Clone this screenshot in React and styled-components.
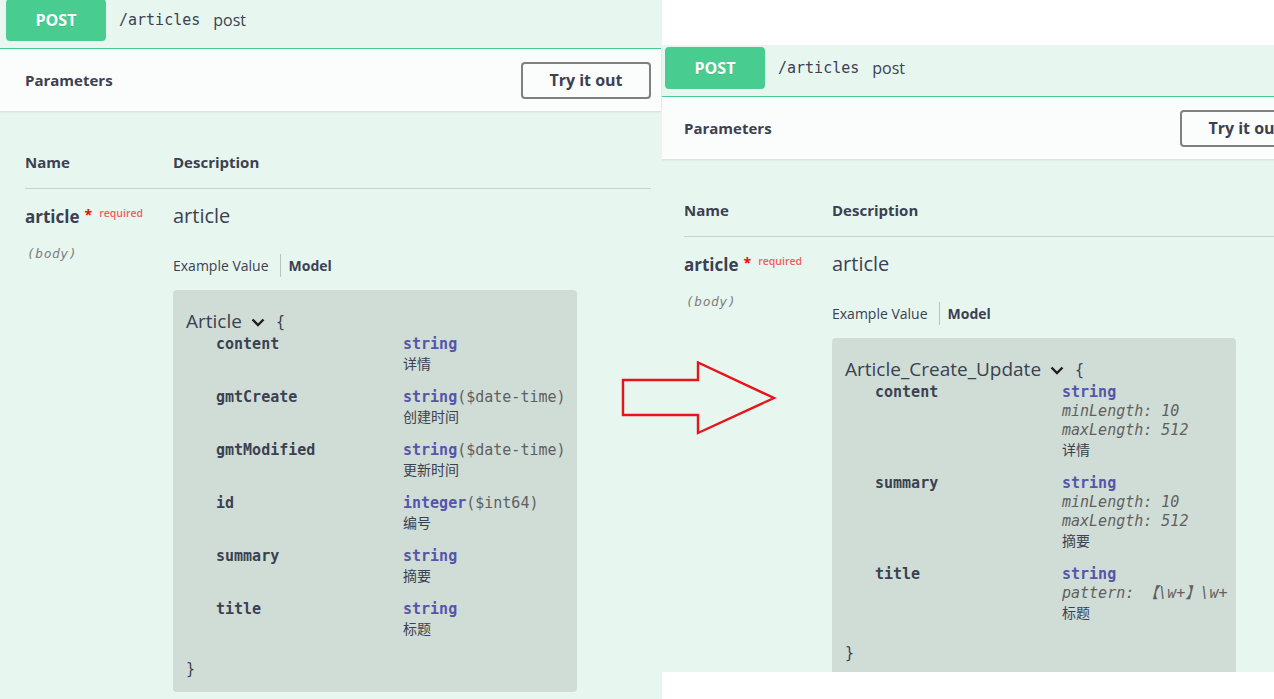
import React from 'react';
import styled, { createGlobalStyle } from 'styled-components';

const SANS = '"Open Sans", "Noto Sans CJK SC", sans-serif';
const MONO = '"DejaVu Sans Mono", "Noto Sans CJK SC", monospace';

const GlobalStyle = createGlobalStyle`
  html, body {
    margin: 0;
    padding: 0;
    background: #fff;
  }
  body {
    font-family: ${SANS};
    color: #3b4151;
  }
`;

const left = {
  model: 'Article',
  props: [
    { name: 'content', type: 'string', desc: '详情' },
    { name: 'gmtCreate', type: 'string', format: '$date-time', desc: '创建时间' },
    { name: 'gmtModified', type: 'string', format: '$date-time', desc: '更新时间' },
    { name: 'id', type: 'integer', format: '$int64', desc: '编号' },
    { name: 'summary', type: 'string', desc: '摘要' },
    { name: 'title', type: 'string', desc: '标题' },
  ],
};

const right = {
  model: 'Article_Create_Update',
  props: [
    { name: 'content', type: 'string', extras: ['minLength: 10', 'maxLength: 512'], desc: '详情' },
    { name: 'summary', type: 'string', extras: ['minLength: 10', 'maxLength: 512'], desc: '摘要' },
    { name: 'title', type: 'string', extras: ['pattern: 【\\w+】\\w+'], desc: '标题' },
  ],
};

const Chevron = () => (
  <svg width="14" height="9" viewBox="0 0 14 9">
    <polyline points="1.5,1.5 7,7 12.5,1.5" fill="none" stroke="#1f1f1f" strokeWidth="2.4" />
  </svg>
);

const Arrow = () => (
  <ArrowWrap width="157" height="74" viewBox="0 0 157 74">
    <polygon
      points="2,19 77,19 77,1.5 153,37 77,72 77,54 2,54"
      fill="none"
      stroke="#e8141c"
      strokeWidth="2.4"
    />
  </ArrowWrap>
);

// one swagger operation block, both screenshots share the same layout
const Operation = ({ data }) => (
  <Opblock>
    <OpHeader>
      <Method>POST</Method>
      <Path>/articles</Path>
      <Summary>post</Summary>
    </OpHeader>
    <SectionBar>
      <SectionTitle>Parameters</SectionTitle>
      <TryButton>Try it out</TryButton>
    </SectionBar>
    <Params>
      <TableHead>
        <span>Name</span>
        <span>Description</span>
      </TableHead>
      <ParamRow>
        <div>
          <ParamName>
            article<Star>*</Star><Required>required</Required>
          </ParamName>
          <ParamIn>(body)</ParamIn>
        </div>
        <div>
          <ParamDesc>article</ParamDesc>
          <Tabs>
            <Tab>Example Value</Tab>
            <Tab $active>Model</Tab>
          </Tabs>
          <ModelBox>
            <ModelTitle>
              {data.model}
              <ChevronSlot><Chevron /></ChevronSlot>
              <Brace>{'{'}</Brace>
            </ModelTitle>
            {data.props.map(p => (
              <PropRow key={p.name}>
                <PropName>{p.name}</PropName>
                <div>
                  <PropLine>
                    <TypeName>{p.type}</TypeName>
                    {p.format && <TypeFormat>({p.format})</TypeFormat>}
                  </PropLine>
                  {(p.extras || []).map(x => (
                    <Extra key={x}>{x}</Extra>
                  ))}
                  <PropDesc>{p.desc}</PropDesc>
                </div>
              </PropRow>
            ))}
            <Brace $close>{'}'}</Brace>
          </ModelBox>
        </div>
      </ParamRow>
    </Params>
  </Opblock>
);

export default function App () {
  return (
    <>
      <GlobalStyle />
      <Page>
        <Shot $width={662} $top={0} $height={699}>
          <Shift $x={0} $y={-3}>
            <Operation data={left} />
          </Shift>
        </Shot>
        <Shot $width={612} $top={45} $height={627}>
          <Shift $x={-3} $y={0}>
            <Operation data={right} />
          </Shift>
        </Shot>
        <Arrow />
      </Page>
    </>
  );
}

const Page = styled.div`
  position: relative;
  display: flex;
  align-items: flex-start;
  width: 1274px;
  height: 699px;
  overflow: hidden;
  background: #fff;
`;

const Shot = styled.div`
  flex: none;
  width: ${p => p.$width}px;
  height: ${p => p.$height}px;
  margin-top: ${p => p.$top}px;
  overflow: hidden;
  background: #e8f6f0;
`;

const Shift = styled.div`
  margin-left: ${p => p.$x}px;
  margin-top: ${p => p.$y}px;
`;

const ArrowWrap = styled.svg`
  position: absolute;
  left: 621px;
  top: 361px;
`;

const Opblock = styled.div`
  width: 661px;
  background: #e8f6f0;
`;

const OpHeader = styled.div`
  display: flex;
  align-items: center;
  box-sizing: border-box;
  height: 52px;
  padding: 2px 0 7px 6px;
  border-bottom: 1px solid #49cc90;
`;

const Method = styled.div`
  display: flex;
  align-items: center;
  justify-content: center;
  width: 100px;
  height: 42px;
  border-radius: 4px;
  background: #49cc90;
  color: #fff;
  font: 700 16px ${SANS};
  text-shadow: 0 1px 0 rgba(0, 0, 0, 0.1);
`;

const Path = styled.span`
  margin-left: 13px;
  font: 400 15px ${MONO};
  color: #3b4151;
`;

const Summary = styled.span`
  margin-left: 13px;
  font: 400 16px ${SANS};
  color: #3b4151;
`;

const SectionBar = styled.div`
  display: flex;
  align-items: center;
  justify-content: space-between;
  height: 62px;
  padding: 0 10px 0 25px;
  background: rgba(255, 255, 255, 0.8);
  box-shadow: 0 1px 2px rgba(0, 0, 0, 0.1);
`;

const SectionTitle = styled.h4`
  margin: 0;
  font: 700 15px ${SANS};
  color: #3b4151;
`;

const TryButton = styled.button`
  width: 130px;
  height: 37px;
  border: 2px solid #808080;
  border-radius: 4px;
  background: transparent;
  font: 700 16px ${SANS};
  color: #3b4151;
  cursor: pointer;
`;

const Params = styled.div`
  padding: 40px 10px 0 25px;
`;

const TableHead = styled.div`
  display: grid;
  grid-template-columns: 148px 1fr;
  padding-bottom: 15px;
  border-bottom: 1px solid rgba(59, 65, 81, 0.2);
  font: 700 15px/22px ${SANS};
  color: #3b4151;
`;

const ParamRow = styled.div`
  display: grid;
  grid-template-columns: 148px 1fr;
  padding-top: 16px;
`;

const ParamName = styled.div`
  font: 700 17px/24px ${SANS};
  color: #3b4151;
  white-space: nowrap;
`;

const Star = styled.span`
  position: relative;
  top: -3px;
  margin-left: 5px;
  font: 700 14px ${SANS};
  color: #f00;
`;

const Required = styled.span`
  position: relative;
  top: -6px;
  margin-left: 7px;
  font: 600 10.5px ${SANS};
  color: #f25b60;
`;

const ParamIn = styled.div`
  margin: 16px 0 0 2px;
  font: italic 400 13px/18px ${MONO};
  letter-spacing: 0.5px;
  color: #808080;
`;

const ParamDesc = styled.p`
  margin: 0;
  font: 400 20px/22px ${SANS};
  color: #3b4151;
`;

const Tabs = styled.div`
  display: flex;
  align-items: center;
  height: 23px;
  margin-top: 27px;
`;

const Tab = styled.div`
  display: flex;
  align-items: center;
  height: 100%;
  padding: ${p => (p.$active ? '0 0 0 8px' : '0 11px 0 0')};
  border-right: ${p => (p.$active ? 'none' : '1px solid rgba(0, 0, 0, 0.2)')};
  font: ${p => (p.$active ? 700 : 400)} 14px ${SANS};
  color: #3b4151;
`;

const ModelBox = styled.div`
  width: 404px;
  box-sizing: border-box;
  margin-top: 13px;
  padding: 16px 13px 13px;
  border-radius: 4px;
  background: rgba(0, 0, 0, 0.1);
`;

const ModelTitle = styled.div`
  display: flex;
  align-items: center;
  height: 29px;
  font: 400 19px ${SANS};
  color: #3b4151;
  white-space: nowrap;
`;

const ChevronSlot = styled.span`
  display: flex;
  margin: 3px 0 0 9px;
`;

const Brace = styled.span`
  display: block;
  margin: ${p => (p.$close ? '7px 0 0 0' : '3px 0 0 11px')};
  font: 400 15px/19px ${MONO};
  color: #3b4151;
`;

const PropRow = styled.div`
  display: grid;
  grid-template-columns: 187px 1fr;
  padding: 0 0 15px 30px;
`;

const PropName = styled.div`
  font: 600 15px/19px ${MONO};
  color: #3b4151;
`;

const PropLine = styled.div`
  font: 400 15px/19px ${MONO};
  white-space: nowrap;
`;

const TypeName = styled.span`
  font-weight: 600;
  color: #55a;
`;

const TypeFormat = styled.span`
  color: #606060;
`;

const Extra = styled.div`
  font: italic 400 15px/19px ${MONO};
  color: #606060;
  white-space: nowrap;
`;

const PropDesc = styled.div`
  font: 400 14px/19px "Noto Sans CJK SC", sans-serif;
  color: #3b4151;
`;
